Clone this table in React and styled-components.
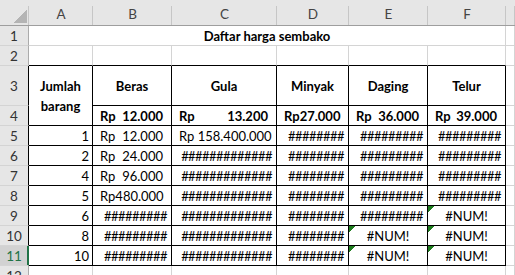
import React from "react";
import styled, { createGlobalStyle, css } from "styled-components";

const GlobalStyle = createGlobalStyle`
  html, body {
    margin: 0;
    padding: 0;
    background: #ffffff;
    overflow: hidden;
  }
  body {
    font-family: Lato, "Liberation Sans", sans-serif;
    font-size: 13px;
    color: #000;
  }
`;

const GRID = "#d4d4d4";
const INK = "#000000";
const GREEN = "#217346";

const Sheet = styled.div`
  display: grid;
  grid-template-columns: 29px 64px 79px 105px 72px 79px 78px 1fr;
  grid-template-rows: 26px 20px 20px 40px 20px repeat(7, 20px) 20px;
  width: 515px;
`;

const Corner = styled.div`
  display: flex;
  align-items: flex-end;
  justify-content: flex-end;
  padding: 0 2px 2px 0;
  box-sizing: border-box;
  background: linear-gradient(#c6c6c6, #c6c6c6) right bottom / 1px 19px no-repeat, #e6e6e6;
  border-bottom: 1px solid #9e9e9e;
`;

const CornerMark = styled.span`
  width: 13px;
  height: 13px;
  background: linear-gradient(to top left, #b4b4b4 50%, transparent 50%);
`;

const ColHead = styled.div`
  display: flex;
  align-items: flex-end;
  justify-content: center;
  padding-bottom: 2px;
  box-sizing: border-box;
  color: #444;
  font-size: 13.5px;
  line-height: 18px;
  background: linear-gradient(#c6c6c6, #c6c6c6) right bottom / 1px 19px no-repeat, #e6e6e6;
  border-bottom: 1px solid #9e9e9e;
`;

const RowHead = styled.div`
  display: flex;
  align-items: center;
  justify-content: center;
  box-sizing: border-box;
  font-size: 13.5px;
  color: ${(p) => (p.$active ? GREEN : "#333")};
  background: ${(p) => (p.$active ? "#d2d2d2" : "#e6e6e6")};
  border-bottom: 1px solid ${GRID};
  border-right: 1px solid ${(p) => p.$edge || "#ababab"};
  ${(p) =>
    p.$active &&
    css`
      box-shadow: inset -1px 0 0 ${GREEN};
    `}
`;

const Cell = styled.div`
  display: flex;
  align-items: center;
  justify-content: ${(p) => p.$justify || "flex-start"};
  box-sizing: border-box;
  min-width: 0;
  overflow: hidden;
  white-space: nowrap;
  padding: ${(p) => p.$pad || "0 3px"};
  line-height: 18px;
  font-weight: ${(p) => (p.$bold ? 700 : 400)};
  border-right: 1px solid ${(p) => p.$right || GRID};
  border-bottom: 1px solid ${(p) => p.$bottom || GRID};
  grid-column: ${(p) => p.$span || "auto"};
  grid-row: ${(p) => p.$rows || "auto"};
  background: ${(p) =>
    p.$err ? "linear-gradient(135deg, #1f7d1f 4.3px, transparent 4.3px), #fff" : "#fff"};
`;

const Wrap = styled.span`
  white-space: normal;
  text-align: center;
  line-height: 20px;
`;

const Hashes = styled.span`
  letter-spacing: -0.55px;
`;

const Accounting = ({ value, bold, tight }) => (
  <Cell
    $bold={bold}
    $justify={tight ? "flex-start" : "space-between"}
    $pad={tight ? "0 6px 0 7px" : "0 8px 0 7px"}
    $right={INK}
    $bottom={INK}
  >
    {tight ? (
      <span>Rp{value}</span>
    ) : (
      <>
        <span>Rp</span>
        <span>{value}</span>
      </>
    )}
  </Cell>
);

const columns = ["A", "B", "C", "D", "E", "F", ""];

const hash = (n) => "#".repeat(n);

const rowsData = [
  { n: 5, a: "1", b: { v: "12.000" }, c: { v: "Rp 158.400.000", plain: true }, d: 8, e: 9, f: 9 },
  { n: 6, a: "2", b: { v: "24.000" }, c: 13, d: 8, e: 9, f: 9 },
  { n: 7, a: "4", b: { v: "96.000" }, c: 13, d: 8, e: 9, f: 9 },
  { n: 8, a: "5", b: { v: "480.000", tight: true }, c: 13, d: 8, e: 9, f: 9 },
  { n: 9, a: "6", b: 9, c: 13, d: 8, e: 9, f: "num" },
  { n: 10, a: "8", b: 9, c: 13, d: 8, e: "num", f: "num" },
  { n: 11, a: "10", b: 9, c: 13, d: 8, e: "num", f: "num" },
];

const prices = [
  { v: "12.000" },
  { v: "13.200" },
  { v: "27.000", tight: true },
  { v: "36.000" },
  { v: "39.000" },
];

const items = ["Beras", "Gula", "Minyak", "Daging", "Telur"];

const Value = ({ data }) => {
  if (data === "num") {
    return (
      <Cell $justify="center" $right={INK} $bottom={INK} $err>
        #NUM!
      </Cell>
    );
  }
  if (typeof data === "number") {
    return (
      <Cell $justify="flex-end" $pad="0 4px 0 0" $right={INK} $bottom={INK}>
        <Hashes>{hash(data)}</Hashes>
      </Cell>
    );
  }
  if (data.plain) {
    return (
      <Cell $pad="0 0 0 7px" $right={INK} $bottom={INK}>
        {data.v}
      </Cell>
    );
  }
  return <Accounting value={data.v} tight={data.tight} />;
};

export default function App() {
  return (
    <>
      <GlobalStyle />
      <Sheet>
        <Corner>
          <CornerMark />
        </Corner>
        {columns.map((c, i) => (
          <ColHead key={i}>{c}</ColHead>
        ))}

        <RowHead>1</RowHead>
        <Cell $span="span 6" $justify="center" $bold>
          Daftar harga sembako
        </Cell>
        <Cell />

        <RowHead>2</RowHead>
        {[0, 1, 2, 3, 4, 5].map((i) => (
          <Cell key={i} $bottom={INK} />
        ))}
        <Cell />

        <RowHead $edge={INK}>3</RowHead>
        <Cell $rows="span 2" $justify="center" $bold $right={INK} $bottom={INK}>
          <Wrap>
            Jumlah
            <br />
            barang
          </Wrap>
        </Cell>
        {items.map((t) => (
          <Cell key={t} $justify="center" $bold $right={INK} $bottom={INK}>
            {t}
          </Cell>
        ))}
        <Cell />

        <RowHead $edge={INK}>4</RowHead>
        {prices.map((p, i) => (
          <Accounting key={i} value={p.v} tight={p.tight} bold />
        ))}
        <Cell />

        {rowsData.map((r) => (
          <React.Fragment key={r.n}>
            <RowHead $edge={r.n === 11 ? GREEN : INK} $active={r.n === 11}>
              {r.n}
            </RowHead>
            <Cell $justify="flex-end" $pad="0 3px 0 0" $right={INK} $bottom={INK}>
              {r.a}
            </Cell>
            <Value data={r.b} />
            <Value data={r.c} />
            <Value data={r.d} />
            <Value data={r.e} />
            <Value data={r.f} />
            <Cell />
          </React.Fragment>
        ))}

        <RowHead>12</RowHead>
        {[0, 1, 2, 3, 4, 5, 6].map((i) => (
          <Cell key={i} />
        ))}
      </Sheet>
    </>
  );
}
